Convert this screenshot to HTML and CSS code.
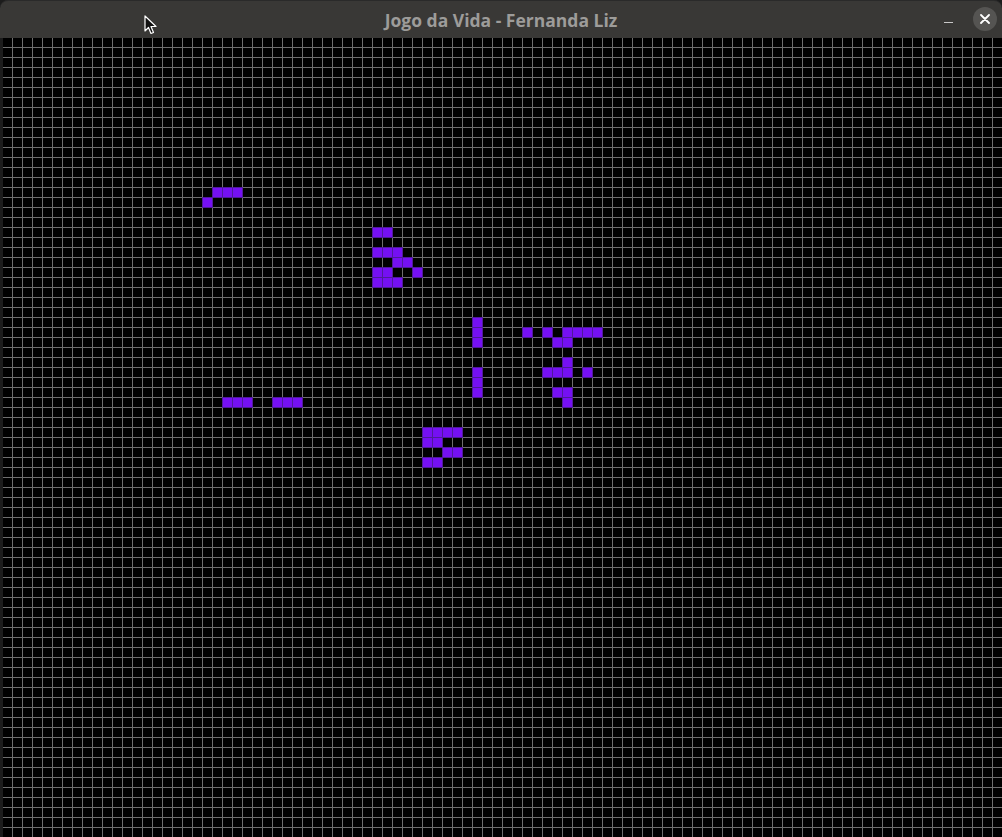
FILE: index.html
```html
<!DOCTYPE html>
<html lang="pt">
<head>
<meta charset="utf-8">
<title>Jogo da Vida - Fernanda Liz</title>
<link rel="stylesheet" href="styles.css">
</head>
<body>
<div class="window">
  <header class="titlebar">
    <span class="title">Jogo da Vida - Fernanda Liz</span>
    <div class="controls">
      <span class="btn-min"></span>
      <span class="btn-close">
        <svg width="10" height="10" viewBox="0 0 10 10"><path d="M1 1L9 9M9 1L1 9" stroke="#ffffff" stroke-width="1.8" stroke-linecap="round"/></svg>
      </span>
    </div>
    <svg class="cursor" width="14" height="20" viewBox="0 0 14 20"><path d="M1 1 L1 16 L4.5 12.5 L7 18.5 L9.5 17.5 L7 11.5 L12 11.5 Z" fill="#111" stroke="#fff" stroke-width="1.2" stroke-linejoin="round"/></svg>
  </header>
  <main class="board">
    <div class="cell" style="grid-area:16/22"></div>
    <div class="cell" style="grid-area:16/23"></div>
    <div class="cell" style="grid-area:16/24"></div>
    <div class="cell" style="grid-area:17/21"></div>

    <div class="cell" style="grid-area:20/38"></div>
    <div class="cell" style="grid-area:20/39"></div>
    <div class="cell" style="grid-area:22/38"></div>
    <div class="cell" style="grid-area:22/39"></div>
    <div class="cell" style="grid-area:22/40"></div>
    <div class="cell" style="grid-area:23/40"></div>
    <div class="cell" style="grid-area:23/41"></div>
    <div class="cell" style="grid-area:24/38"></div>
    <div class="cell" style="grid-area:24/39"></div>
    <div class="cell" style="grid-area:24/42"></div>
    <div class="cell" style="grid-area:25/38"></div>
    <div class="cell" style="grid-area:25/39"></div>
    <div class="cell" style="grid-area:25/40"></div>

    <div class="cell" style="grid-area:29/48"></div>
    <div class="cell" style="grid-area:30/48"></div>
    <div class="cell" style="grid-area:31/48"></div>
    <div class="cell" style="grid-area:30/53"></div>
    <div class="cell" style="grid-area:30/55"></div>
    <div class="cell" style="grid-area:30/57"></div>
    <div class="cell" style="grid-area:30/58"></div>
    <div class="cell" style="grid-area:30/59"></div>
    <div class="cell" style="grid-area:30/60"></div>
    <div class="cell" style="grid-area:31/56"></div>
    <div class="cell" style="grid-area:31/57"></div>
    <div class="cell" style="grid-area:33/57"></div>
    <div class="cell" style="grid-area:34/55"></div>
    <div class="cell" style="grid-area:34/56"></div>
    <div class="cell" style="grid-area:34/57"></div>
    <div class="cell" style="grid-area:34/59"></div>
    <div class="cell" style="grid-area:34/48"></div>
    <div class="cell" style="grid-area:35/48"></div>
    <div class="cell" style="grid-area:36/48"></div>
    <div class="cell" style="grid-area:36/56"></div>
    <div class="cell" style="grid-area:36/57"></div>
    <div class="cell" style="grid-area:37/57"></div>

    <div class="cell" style="grid-area:37/23"></div>
    <div class="cell" style="grid-area:37/24"></div>
    <div class="cell" style="grid-area:37/25"></div>
    <div class="cell" style="grid-area:37/28"></div>
    <div class="cell" style="grid-area:37/29"></div>
    <div class="cell" style="grid-area:37/30"></div>

    <div class="cell" style="grid-area:40/43"></div>
    <div class="cell" style="grid-area:40/44"></div>
    <div class="cell" style="grid-area:40/45"></div>
    <div class="cell" style="grid-area:40/46"></div>
    <div class="cell" style="grid-area:41/43"></div>
    <div class="cell" style="grid-area:41/44"></div>
    <div class="cell" style="grid-area:42/45"></div>
    <div class="cell" style="grid-area:42/46"></div>
    <div class="cell" style="grid-area:43/43"></div>
    <div class="cell" style="grid-area:43/44"></div>
  </main>
</div>
</body>
</html>
```

FILE: styles.css
```css
html, body {
  margin: 0;
  padding: 0;
  background: #1c1c1c;
  overflow: hidden;
}

.window {
  width: 1002px;
  height: 837px;
  display: flex;
  flex-direction: column;
  background: #1c1c1c;
}

.titlebar {
  position: relative;
  height: 38px;
  flex: none;
  display: flex;
  align-items: center;
  justify-content: center;
  background: #393836;
  border-top: 1px solid #2a2a2a;
  border-radius: 8px 8px 0 0;
  box-sizing: border-box;
}

.title {
  font-family: "Open Sans", "DejaVu Sans", sans-serif;
  font-weight: 700;
  font-size: 17.5px;
  color: #9d9c9a;
  letter-spacing: 0;
  margin-top: 0;
}

.controls {
  position: absolute;
  right: 5px;
  top: 6px;
  display: flex;
  align-items: center;
  gap: 20px;
}

.btn-min {
  display: block;
  width: 9px;
  height: 1px;
  background: #c8c8c8;
  margin-top: 7px;
}

.btn-close {
  display: flex;
  align-items: center;
  justify-content: center;
  width: 24px;
  height: 24px;
  border-radius: 50%;
  background: #555452;
}

.cursor {
  position: absolute;
  left: 144px;
  top: 14px;
}

.board {
  flex: 1;
  margin-left: 3px;
  overflow: hidden;
  display: grid;
  grid-template-columns: repeat(100, 10px);
  grid-template-rows: repeat(80, 10px);
  align-content: start;
  background-color: #000;
  background-image:
    repeating-linear-gradient(to right, transparent 0 9px, #6e6e6e 9px 10px),
    repeating-linear-gradient(to bottom, transparent 0 9px, #6e6e6e 9px 10px);
}

.cell {
  width: 11px;
  height: 11px;
  margin: -1px 0 0 -1px;
  box-sizing: border-box;
  background: #7510f2;
  border: 1px solid #4f1a99;
}
```
